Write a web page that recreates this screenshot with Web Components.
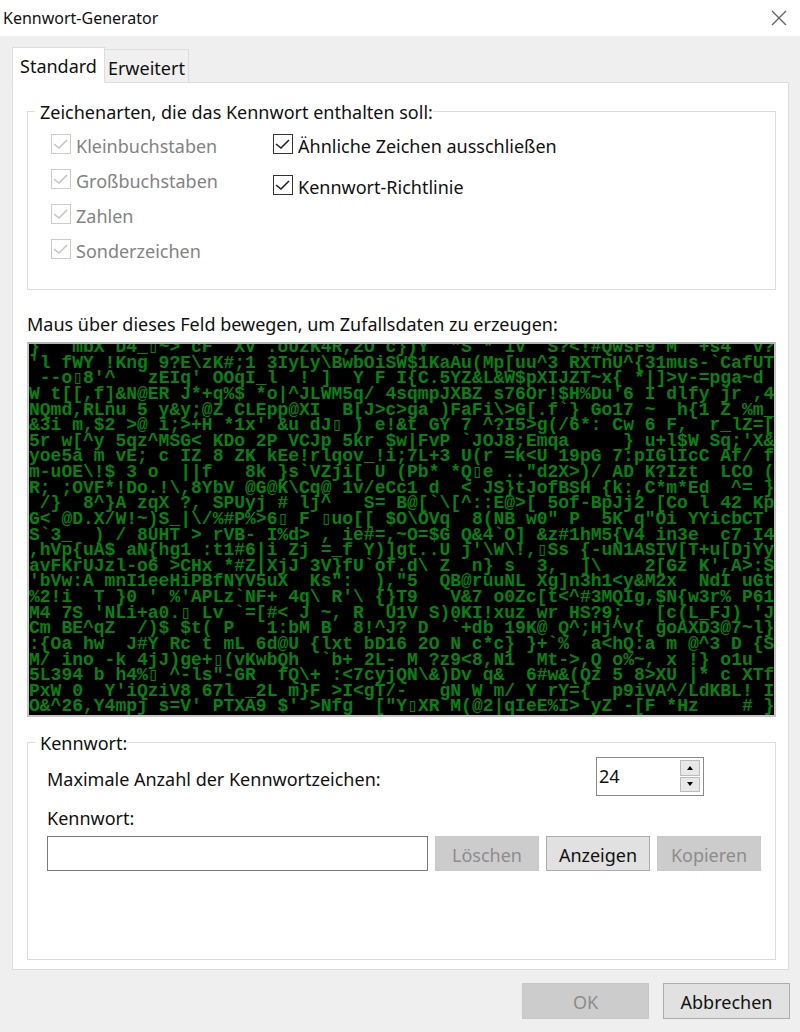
<!DOCTYPE html>
<html lang="de">
<head>
<meta charset="utf-8">
<meta name="viewport" content="width=device-width, initial-scale=1">
<title>Kennwort-Generator</title>
<style>
    body {
        margin: 0;
        background: #efefef;
        color: #111;
        font: 18px/24px "Noto Sans", "Open Sans", sans-serif;
    }
</style>
</head>
<body>
<password-dialog></password-dialog>

<script>
function attach(element, html) {
    const template = document.createElement('template');
    template.innerHTML = html;
    const root = element.attachShadow({ mode: 'open' });
    root.appendChild(template.content.cloneNode(true));
    return root;
}

class TitleBar extends HTMLElement {
    connectedCallback() {
        attach(this, `
            <style>
                :host {
                    display: flex;
                    align-items: center;
                    justify-content: space-between;
                    height: 36px;
                    padding: 0 12px 0 3px;
                    background: #fff;
                }
                h1 {
                    margin: 0;
                    font-size: 16px;
                    font-weight: 400;
                }
                button {
                    display: flex;
                    padding: 0;
                    border: 0;
                    background: none;
                }
            </style>
            <h1><slot></slot></h1>
            <button type="button" aria-label="Schließen">
                <svg width="18" height="18" viewBox="0 0 18 18" fill="none" stroke="#666" stroke-width="1.4">
                    <path d="M2 2l14 14M16 2L2 16"/>
                </svg>
            </button>
        `);
    }
}

class TabStrip extends HTMLElement {
    connectedCallback() {
        attach(this, `
            <style>
                :host {
                    display: flex;
                    align-items: flex-end;
                    position: relative;
                    z-index: 1;
                    margin-bottom: -1px;
                }
                button {
                    height: 34px;
                    padding: 3px 3px 0;
                    border: 1px solid #dcdcdc;
                    border-left: 0;
                    background: #f0f0f0;
                    color: inherit;
                    font: inherit;
                }
                button[aria-selected="true"] {
                    height: 36px;
                    padding: 2px 7px 0;
                    border-left: 1px solid #dcdcdc;
                    border-bottom-color: #fff;
                    background: #fff;
                }
            </style>
            <button type="button" role="tab" aria-selected="true">Standard</button>
            <button type="button" role="tab" aria-selected="false">Erweitert</button>
        `);
        this.setAttribute('role', 'tablist');
    }
}

class GroupBox extends HTMLElement {
    connectedCallback() {
        attach(this, `
            <style>
                :host {
                    display: flex;
                }
                fieldset {
                    flex: 1;
                    min-width: 0;
                    margin: 0;
                    padding: 0 14px 0 19px;
                    border: 1px solid #dcdcdc;
                }
                legend {
                    margin-left: -12px;
                    padding: 2px 0 0 5px;
                }
            </style>
            <fieldset>
                <legend>${this.getAttribute('caption')}</legend>
                <slot></slot>
            </fieldset>
        `);
    }
}

class CheckOption extends HTMLElement {
    connectedCallback() {
        const disabled = this.hasAttribute('disabled') ? 'disabled' : '';
        attach(this, `
            <style>
                :host {
                    display: block;
                    color: #111;
                }
                :host([disabled]) {
                    color: #838383;
                }
                label {
                    display: flex;
                    gap: 5px;
                }
                .box {
                    display: grid;
                    width: 20px;
                    height: 20px;
                }
                input, svg {
                    grid-area: 1 / 1;
                    width: 20px;
                    height: 20px;
                    margin: 0;
                }
                input {
                    appearance: none;
                    box-sizing: border-box;
                    border: 1px solid #333;
                    background: #fff;
                }
                input:disabled {
                    border-color: #ccc;
                }
                svg {
                    visibility: hidden;
                    pointer-events: none;
                    stroke: #222;
                }
                input:checked + svg {
                    visibility: visible;
                }
                input:disabled + svg {
                    stroke: #c4c4c4;
                }
            </style>
            <label>
                <span class="box">
                    <input type="checkbox" checked ${disabled}>
                    <svg viewBox="0 0 20 20" fill="none" stroke-width="1.6"><path d="M3 10l5 4 8-8"/></svg>
                </span>
                <span><slot></slot></span>
            </label>
        `);
    }
}

class PushButton extends HTMLElement {
    connectedCallback() {
        const disabled = this.hasAttribute('disabled') ? 'disabled' : '';
        attach(this, `
            <style>
                :host {
                    display: flex;
                }
                button {
                    flex: 1;
                    padding: 2px 0 0;
                    border: 1px solid #adadad;
                    background: #e1e1e1;
                    color: #111;
                    font: inherit;
                }
                button:disabled {
                    border-color: #c8c8c8;
                    background: #ccc;
                    color: #8c8c8c;
                }
            </style>
            <button type="button" ${disabled}><slot></slot></button>
        `);
    }
}

class PasswordFields extends HTMLElement {
    connectedCallback() {
        const root = attach(this, `
            <style>
                :host {
                    display: block;
                    padding-top: 2px;
                }
                .count {
                    display: flex;
                    align-items: center;
                    justify-content: space-between;
                    padding-right: 57px;
                }
                .count label {
                    padding-top: 5px;
                }
                .spin {
                    display: flex;
                    box-sizing: border-box;
                    width: 108px;
                    height: 39px;
                    padding: 2px 3px 3px 2px;
                    border: 1px solid #8a8a8a;
                    background: #fff;
                }
                input {
                    min-width: 0;
                    box-sizing: border-box;
                    border: 0;
                    background: #fff;
                    color: inherit;
                    font: inherit;
                }
                #count {
                    flex: 1;
                    padding: 0;
                    appearance: textfield;
                }
                #count::-webkit-inner-spin-button {
                    appearance: none;
                }
                .arrows {
                    display: grid;
                    gap: 1px;
                    width: 20px;
                }
                .arrows button {
                    display: grid;
                    place-items: center;
                    padding: 0;
                    border: 1px solid #bbb;
                    background: #e8e8e8;
                }
                .name {
                    display: block;
                    margin: 10px 0 6px;
                }
                .entry {
                    display: grid;
                    grid-template-columns: 1fr 104px 104px 104px;
                    gap: 7px;
                    height: 34px;
                }
                #password {
                    height: 35px;
                    border: 1px solid #7a7a7a;
                }
            </style>
            <div class="count">
                <label for="count">Maximale Anzahl der Kennwortzeichen:</label>
                <div class="spin">
                    <input id="count" type="number" min="1" value="24">
                    <div class="arrows">
                        <button id="more" type="button" aria-label="Mehr">
                            <svg width="8" height="4" viewBox="0 0 8 4"><path d="M1 4l3-4 3 4z"/></svg>
                        </button>
                        <button id="less" type="button" aria-label="Weniger">
                            <svg width="8" height="4" viewBox="0 0 8 4"><path d="M1 0l3 4 3-4z"/></svg>
                        </button>
                    </div>
                </div>
            </div>
            <label class="name" for="password">Kennwort:</label>
            <div class="entry">
                <input id="password" type="text">
                <push-button disabled>Löschen</push-button>
                <push-button>Anzeigen</push-button>
                <push-button disabled>Kopieren</push-button>
            </div>
        `);
        const count = root.getElementById('count');
        root.getElementById('more').addEventListener('click', () => count.stepUp());
        root.getElementById('less').addEventListener('click', () => count.stepDown());
    }
}

const NOISE = [
    "}   mbX D4_▯~> cF  XV .oUzK4R,2O c})Y  \"S * 1V  S?<!#QwsF9 M  +s4  v?",
    "'l fWY !Kng 9?E\\zK#;1 3IyLy\\BwbOiSW$1KaAu(Mp[uu^3 RXTnU^{31mus-`CafUTU",
    " --o▯8'^   zEIq' OOqI_l  ! ]  Y F I{C.5YZ&L&W$pXIJZT~x{ *|]>v-=pga~d",
    "W t[[,f]&N@ER J*+q%$ *o|^JLWM5q/ 4sqmpJXBZ s76Or!$H%Du'6 I dlfy jr ,4",
    "NQmd,RLnu 5 y&y;@Z CLEpp@XI  B[J>c>ga )FaFi\\>G[.f`} Go17 ~  h{1 Z %m_G",
    "&3i m,$2 >@ i;>+H *1x' &u dJ▯ ) e!&t GY 7 ^?I5>g(/6*: Cw 6 F,  r_lZ=[_",
    "5r w[^y 5qz^MSG< KDo 2P VCJp 5kr $w|FvP `JOJ8;Emqa     } u+l$W Sq;'X&<",
    "yoe5a m vE; c IZ 8 ZK kEe!rlqov_!i;7L+3 U(r =k<U 19pG 7:pIGlIcC Af/ f",
    "m-uOE\\!$ 3 o  ||f   8k }s`VZji[ U (Pb* *Q▯e ..\"d2X>)/ AD K?Izt  LCO (m",
    "R; ;OVF*!Do.!\\,8YbV @G@K\\Cq@ 1v/eCc1 d  < JS}tJofBSH {k:,C*m*Ed  ^= }",
    " /}  8^}A zqX ?, SPUyj # lj^   S= B@[`\\[^::E@>[ 5of-BpJj2 [Co l 42 Kp",
    "G< @D.X/W!~)S_|\\/%#P%>6▯ F ▯uo[[ $O\\OVq  8(NB w0\" P  5K q\"Oi YYicbCT S",
    "S`3_  ) / 8UHT > rVB- I%d> , ie#=,~O=$G Q&4`O] &z#1hM5{V4 in3e  c7 I43",
    ",hVp{uA$ aN{hg1 :t1#6|i Zj =_f Y)]gt..U j'\\W\\!,▯Ss {-uN1ASIV[T+u[DjYy'",
    "avFKrUJzl-o6 >CHx *#Z|XjJ 3V}fU`of.d\\ Z  n} s  3,  ]\\    2[Gz K',A>:SQ",
    "'bVw:A mnI1eeHiPBfNYV5uX  Ks\":  ),\"5  QB@ruuNL Xg]n3h1<y&M2x  NdI uGt",
    "%2!i  T }0 ' %'APLz`NF+ 4q\\ R'\\ {}T9   V&7 o0Zc[t<^#3MQIg,$N{w3r% P61E",
    "M4 7S 'NLi+a0.▯ Lv `=[#< J ~, R  U1V S)0KI!xuz wr HS?9;   [c(L_FJ) 'J:",
    "Cm BE^qZ  /)$ $t( P   1:bM B  8!^J? D  `+db 19K@ Q^;Hj^v{ goAXD3@7~l}<",
    ":{Oa hw  J#Y Rc t mL 6d@U {lxt bD16 2O N c*c} }+`%  a<hQ:a m @^3 D {S",
    "M/ ino -k 4jJ)ge+▯(vKwbQh  `b+ 2L- M ?z9<8,N1  Mt->,Q o%~, x !} o1u  H",
    "5L394 b h4%▯ ^-ls\"-GR  fQ\\+ :<7cyjQN\\&)Dv q&  6#w&(Qz 5 8>XU |* c XTf",
    "PxW 0  Y'iQziV8 67l _2L m}F >I<gT/-   gN W m/ Y rY={  p9iVA^/LdKBL! I",
    "O&^26,Y4mpj s=V' PTXA9 $' >Nfg  [\"Y▯XR M(@2|qIeE%I> yZ -[F *Hz    # }"
];

class NoiseField extends HTMLElement {
    connectedCallback() {
        const root = attach(this, `
            <style>
                :host {
                    display: block;
                    overflow: hidden;
                    border: 2px solid #c4c4c4;
                    border-top-color: #b4b4b4;
                    background: #000;
                    cursor: crosshair;
                }
                pre {
                    display: grid;
                    grid-auto-rows: 1fr;
                    height: 375px;
                    margin: -5px 0 0;
                    padding-bottom: 1px;
                    color: #0a8012;
                    font: bold 18px/16px "Liberation Mono", monospace;
                }
                pre span {
                    height: 0;
                }
            </style>
            <pre></pre>
        `);
        const pre = root.querySelector('pre');
        for (const line of NOISE) {
            const row = document.createElement('span');
            row.textContent = line;
            pre.appendChild(row);
        }
    }
}

class PasswordDialog extends HTMLElement {
    connectedCallback() {
        attach(this, `
            <style>
                :host {
                    display: flex;
                    flex-direction: column;
                    min-height: 100vh;
                }
                main {
                    flex: 1;
                    display: flex;
                    flex-direction: column;
                    padding: 11px 11px 0 12px;
                }
                .page {
                    flex: 1;
                    display: flex;
                    flex-direction: column;
                    padding: 15px 12px 9px 14px;
                    border: 1px solid #dcdcdc;
                    background: #fff;
                }
                .kinds {
                    display: grid;
                    grid-template-columns: 222px 1fr;
                    padding: 10px 0 26px 4px;
                }
                .kinds div {
                    display: grid;
                    align-content: start;
                    gap: 11px;
                }
                .kinds .rules {
                    gap: 17px;
                }
                p {
                    margin: 22px 0 6px;
                }
                .last {
                    flex: 1;
                    margin-top: 12px;
                }
                footer {
                    display: grid;
                    grid-template-columns: 127px 127px;
                    grid-template-rows: 36px;
                    justify-content: end;
                    gap: 14px;
                    padding: 13px 10px 13px;
                }
            </style>
            <title-bar>Kennwort-Generator</title-bar>
            <main>
                <tab-strip></tab-strip>
                <div class="page">
                    <group-box caption="Zeichenarten, die das Kennwort enthalten soll:">
                        <div class="kinds">
                            <div>
                                <check-option disabled>Kleinbuchstaben</check-option>
                                <check-option disabled>Großbuchstaben</check-option>
                                <check-option disabled>Zahlen</check-option>
                                <check-option disabled>Sonderzeichen</check-option>
                            </div>
                            <div class="rules">
                                <check-option>Ähnliche Zeichen ausschließen</check-option>
                                <check-option>Kennwort-Richtlinie</check-option>
                            </div>
                        </div>
                    </group-box>
                    <p>Maus über dieses Feld bewegen, um Zufallsdaten zu erzeugen:</p>
                    <noise-field></noise-field>
                    <group-box class="last" caption="Kennwort:">
                        <password-fields></password-fields>
                    </group-box>
                </div>
            </main>
            <footer>
                <push-button disabled>OK</push-button>
                <push-button>Abbrechen</push-button>
            </footer>
        `);
    }
}

customElements.define('title-bar', TitleBar);
customElements.define('tab-strip', TabStrip);
customElements.define('group-box', GroupBox);
customElements.define('check-option', CheckOption);
customElements.define('push-button', PushButton);
customElements.define('password-fields', PasswordFields);
customElements.define('noise-field', NoiseField);
customElements.define('password-dialog', PasswordDialog);
</script>
</body>
</html>
